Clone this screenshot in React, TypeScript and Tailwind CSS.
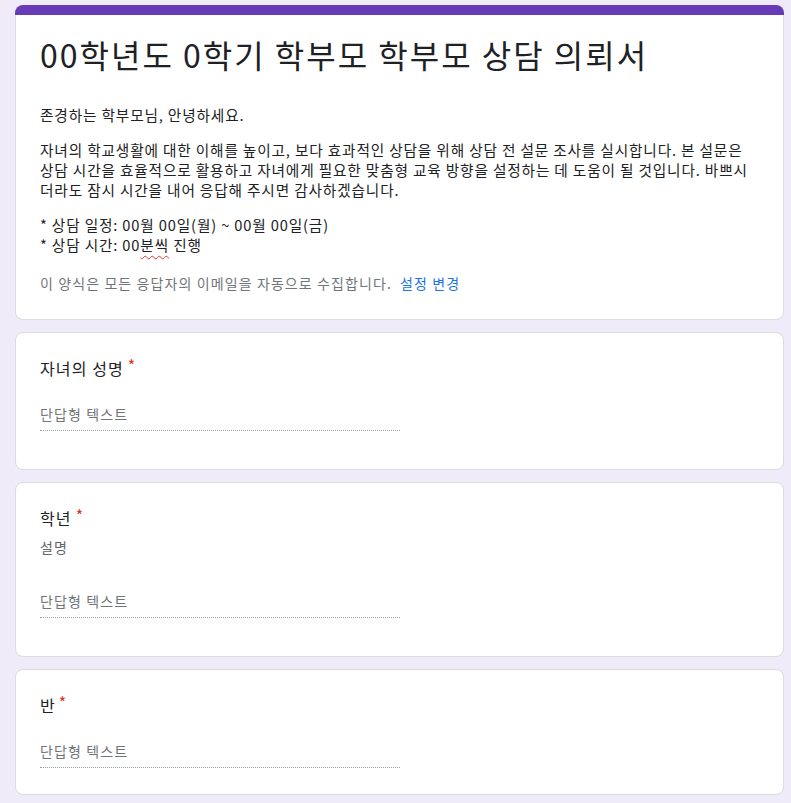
import React from 'react';

const font = { fontFamily: '"Noto Sans CJK KR", "Noto Sans", sans-serif' };

function Required() {
  return <span className="text-[#d93025] pl-[4px] relative top-[-3px] text-[16px]">*</span>;
}

function ShortAnswer({ className = '' }: { className?: string }) {
  return (
    <div className={`w-[360px] border-b border-dotted border-[#9aa0a6] pb-[5px] ${className}`}>
      <span className="text-[14px] leading-[20px] tracking-[1.1px] text-[#70757a]">단답형 텍스트</span>
    </div>
  );
}

export default function App() {
  return (
    <div className="min-h-screen bg-[#f0ebf8] pt-[5px] pb-[20px] text-[#202124]" style={font}>
      <div className="ml-[15px] w-[769px] flex flex-col gap-[12px]">
        {/* Header card */}
        <div>
          <div className="h-[10px] bg-[#673ab7] rounded-t-[8px]" />
          <div className="bg-white border-x border-b border-[#dadce0] rounded-b-[8px] px-[24px] pt-[19px] pb-[26px]">
            <h1 className="text-[32px] leading-[40px] font-normal tracking-[2px]">00학년도 0학기 학부모 학부모 상담 의뢰서</h1>
            <div className="mt-[31px] text-[14.67px] leading-[20px] tracking-[0.85px] w-[720px]">
              <p>존경하는 학부모님, 안녕하세요.</p>
              <p className="mt-[15px]">
                자녀의 학교생활에 대한 이해를 높이고, 보다 효과적인 상담을 위해 상담 전 설문 조사를 실시합니다. 본 설문은 상담 시간을 효율적으로 활용하고 자녀에게 필요한 맞춤형 교육 방향을 설정하는 데 도움이 될 것입니다. 바쁘시더라도 잠시 시간을 내어 응답해 주시면 감사하겠습니다.
              </p>
              <p className="mt-[15px]">
                * 상담 일정: 00월 00일(월) ~ 00월 00일(금)
                <br />* 상담 시간: 00
                <span className="underline decoration-wavy decoration-[#e53935] decoration-1 underline-offset-[4px]">분씩</span> 진행
              </p>
            </div>
            <div className="mt-[18px] text-[14px] leading-[20px] tracking-[1.1px] flex gap-[8px]">
              <span className="text-[#70757a]">이 양식은 모든 응답자의 이메일을 자동으로 수집합니다.</span>
              <span className="text-[#1a73e8]">설정 변경</span>
            </div>
          </div>
        </div>

        {/* 자녀의 성명 */}
        <div className="bg-white border border-[#dadce0] rounded-[8px] px-[24px] pt-[23px] pb-[38px]">
          <div className="text-[16px] leading-[24px] tracking-[1.1px]">
            자녀의 성명
            <Required />
          </div>
          <ShortAnswer className="mt-[21px]" />
        </div>

        {/* 학년 */}
        <div className="bg-white border border-[#dadce0] rounded-[8px] px-[24px] pt-[23px] pb-[38px]">
          <div className="text-[16px] leading-[24px] tracking-[1.1px]">
            학년
            <Required />
          </div>
          <div className="mt-[7px] text-[14px] leading-[20px] tracking-[1.1px] text-[#5f6368]">설명</div>
          <ShortAnswer className="mt-[31px]" />
        </div>

        {/* 반 */}
        <div className="bg-white border border-[#dadce0] rounded-[8px] px-[24px] pt-[23px] pb-[26px]">
          <div className="text-[16px] leading-[24px]">
            반
            <Required />
          </div>
          <ShortAnswer className="mt-[21px]" />
        </div>
      </div>
    </div>
  );
}
